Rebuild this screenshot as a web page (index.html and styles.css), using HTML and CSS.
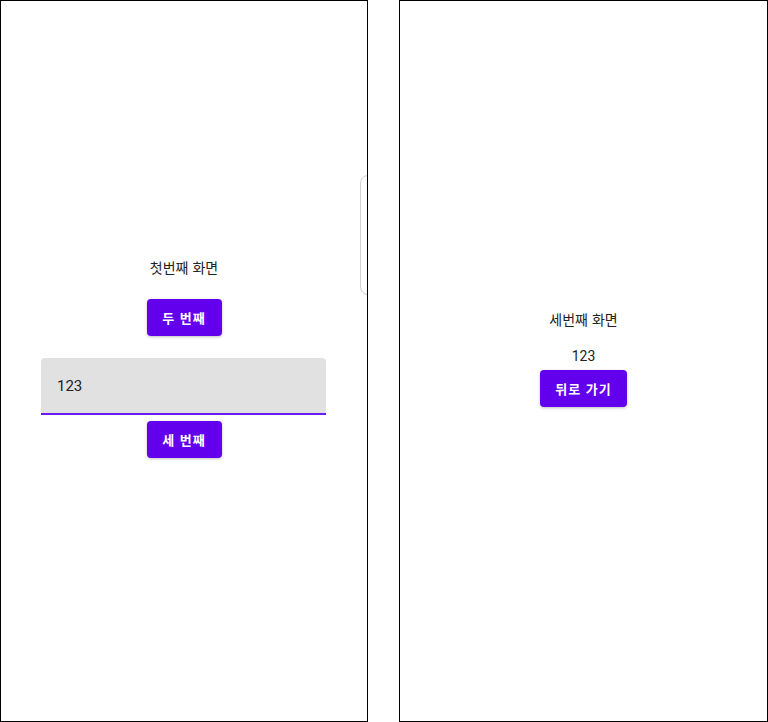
FILE: index.html
```html
<!DOCTYPE html>
<html lang="ko">
<head>
<meta charset="utf-8">
<link rel="stylesheet" href="styles.css">
</head>
<body>
<div class="screens">
  <div class="phone phone-left">
    <div class="handle"></div>
    <div class="content content-left">
      <div class="label">첫번째 화면</div>
      <button class="btn btn-two">두 번째</button>
      <div class="field"><span class="field-text">123</span></div>
      <button class="btn btn-three">세 번째</button>
    </div>
  </div>
  <div class="phone phone-right">
    <div class="content content-right">
      <div class="label">세번째 화면</div>
      <div class="value">123</div>
      <button class="btn btn-back">뒤로 가기</button>
    </div>
  </div>
</div>
</body>
</html>
```
FILE: styles.css
```css
html, body {
  margin: 0;
  padding: 0;
  background: #fff;
}
body {
  font-family: "Noto Sans CJK KR", "Noto Sans", Roboto, sans-serif;
  color: #212121;
}
.screens {
  display: flex;
  gap: 31px;
  width: 768px;
  height: 722px;
}
.phone {
  position: relative;
  box-sizing: border-box;
  height: 722px;
  border: 1px solid #000;
  overflow: hidden;
  background: #fff;
}
.phone-left { width: 368px; }
.phone-right { width: 369px; }
.handle {
  position: absolute;
  left: 359px;
  top: 174px;
  width: 24px;
  height: 120px;
  box-sizing: border-box;
  border: 1px solid #cfcfcf;
  border-radius: 8px;
}
.content {
  display: flex;
  flex-direction: column;
  align-items: center;
}
.content-left { padding-top: 256px; }
.content-right { padding-top: 308px; }
.label {
  font-size: 14px;
  line-height: 20px;
  color: #222;
}
.value {
  font-family: Roboto, "Noto Sans", sans-serif;
  font-size: 14px;
  line-height: 20px;
  margin-top: 17px;
  color: #222;
}
.btn {
  box-sizing: border-box;
  height: 37px;
  border: none;
  border-radius: 4px;
  background: #6200ee;
  color: #fff;
  font-family: "Noto Sans CJK KR", sans-serif;
  font-weight: 700;
  font-size: 13px;
  letter-spacing: 1px;
  padding: 0;
  box-shadow: 0 1px 3px rgba(0,0,0,0.25);
}
.btn-two {
  width: 75px;
  margin-top: 22px;
}
.btn-three {
  width: 75px;
  margin-top: 6px;
}
.btn-back {
  width: 87px;
  margin-top: 4px;
}
.field {
  box-sizing: border-box;
  width: 285px;
  height: 57px;
  margin-top: 22px;
  margin-left: -1px;
  background: #e1e1e1;
  border-radius: 4px 4px 0 0;
  border-bottom: 2px solid #6a1bef;
  display: flex;
  align-items: center;
  padding-left: 16px;
}
.field-text {
  font-family: Roboto, "Noto Sans", sans-serif;
  font-size: 15px;
  color: #222;
  margin-top: 1px;
}
```
